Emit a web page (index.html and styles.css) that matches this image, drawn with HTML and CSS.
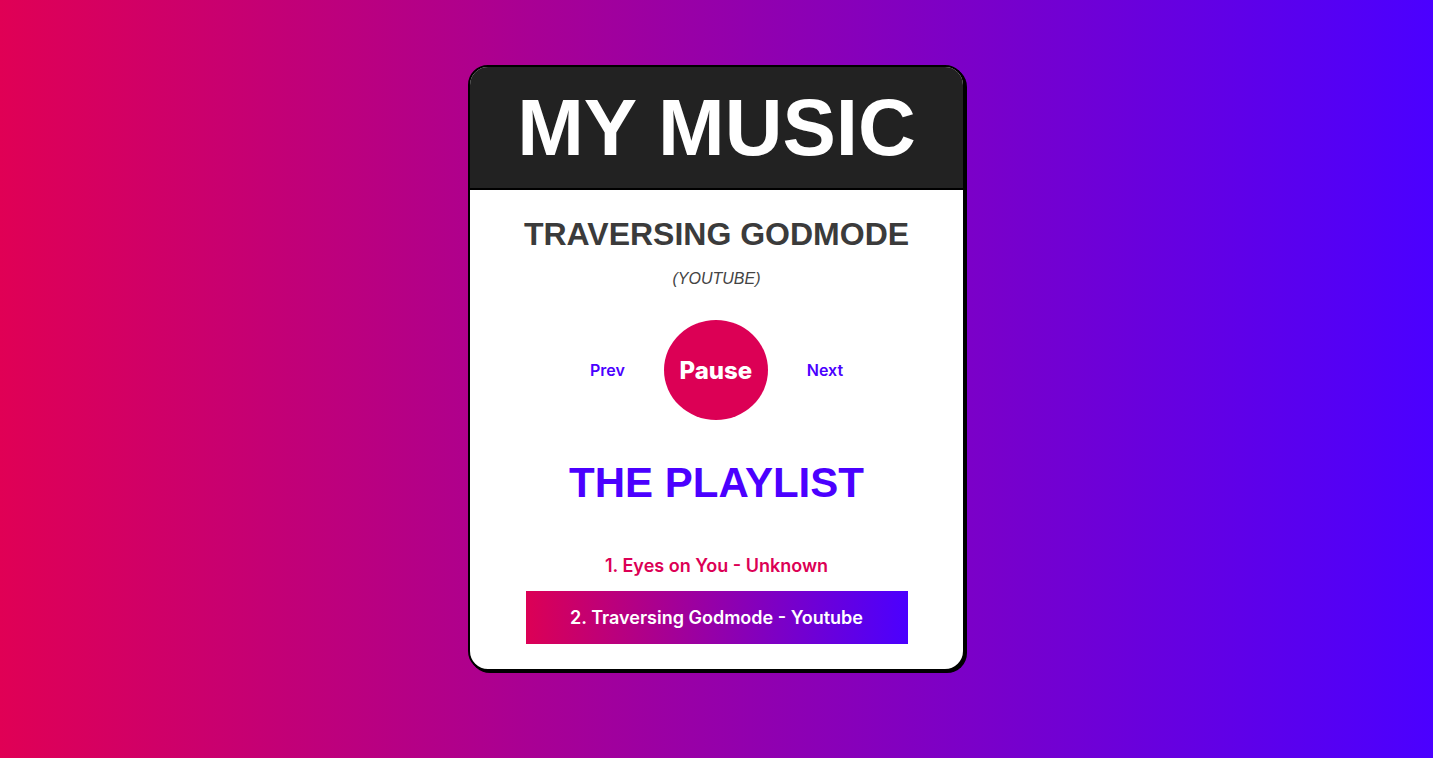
FILE: index.html
```html
<!DOCTYPE html>
<html lang="en">
<head>
    <meta charset="UTF-8">
    <meta name="viewport" content="width=device-width, initial-scale=1.0">
    <title>My Music</title>
    <link rel="stylesheet" href="styles.css">
</head>
<body>
    <div class="player">
        <div class="player-header">
            <h1>MY MUSIC</h1>
        </div>
        <div class="player-body">
            <h2 class="song-title">TRAVERSING GODMODE</h2>
            <p class="song-source">(YOUTUBE)</p>

            <div class="controls">
                <button class="ctrl">Prev</button>
                <button class="play">Pause</button>
                <button class="ctrl">Next</button>
            </div>

            <h2 class="playlist-title">THE PLAYLIST</h2>
            <ul class="playlist">
                <li>1. Eyes on You - Unknown</li>
                <li class="active">2. Traversing Godmode - Youtube</li>
            </ul>
        </div>
    </div>
</body>
</html>
```

FILE: styles.css
```css
html, body {
    height: 100%;
}
body {
    margin: 0;
    padding: 65px 0 0;
    box-sizing: border-box;
    font-family: "Liberation Sans", Arial, sans-serif;
    background: linear-gradient(to right, #e00055, #4b00ff);
}
.player {
    width: 497px;
    margin: 0 auto;
    background-color: #fff;
    border: 2px solid #000;
    border-radius: 20px;
    box-shadow: 2px 2px 0 #000;
    overflow: hidden;
    box-sizing: border-box;
}
.player-header {
    background-color: #222;
    border-bottom: 2px solid #000;
    height: 123px;
    box-sizing: border-box;
    display: flex;
    align-items: center;
    justify-content: center;
}
.player-header h1 {
    margin: 0;
    color: #fff;
    font-size: 80px;
    line-height: 92px;
    font-weight: bold;
}
.player-body {
    text-align: center;
    padding: 26px 0 25px;
}
.song-title {
    margin: 0;
    font-size: 32px;
    line-height: 37px;
    color: #3b3b3b;
}
.song-source {
    margin: 17px 0 0;
    font-size: 16px;
    line-height: 18px;
    font-style: italic;
    color: #444;
}
.controls {
    margin-top: 32px;
    display: flex;
    justify-content: center;
    align-items: center;
    gap: 39px;
}
.controls button {
    border: none;
    background: none;
    padding: 0;
    cursor: pointer;
    font-family: Inter, "Liberation Sans", sans-serif;
}
.ctrl {
    color: #4b00ff;
    font-size: 16px;
    font-weight: 600;
}
.play {
    width: 104px;
    height: 100px;
    border-radius: 50%;
    background-color: #dc0055 !important;
    color: #fff;
    font-size: 24px;
    font-weight: 800;
}
.playlist-title {
    margin: 39px 0 0;
    font-size: 42px;
    line-height: 48px;
    color: #4b00ff;
}
.playlist {
    list-style: none;
    margin: 48px 0 0;
    padding: 0;
    font-family: Inter, "Liberation Sans", sans-serif;
    font-size: 18px;
    font-weight: 600;
    line-height: 22px;
}
.playlist li {
    color: #dc0055;
}
.playlist li.active {
    width: 382px;
    margin: 14px auto 0;
    padding: 16px 0 15px;
    color: #fff;
    background: linear-gradient(to right, #dc0055, #4b00ff);
}
```
